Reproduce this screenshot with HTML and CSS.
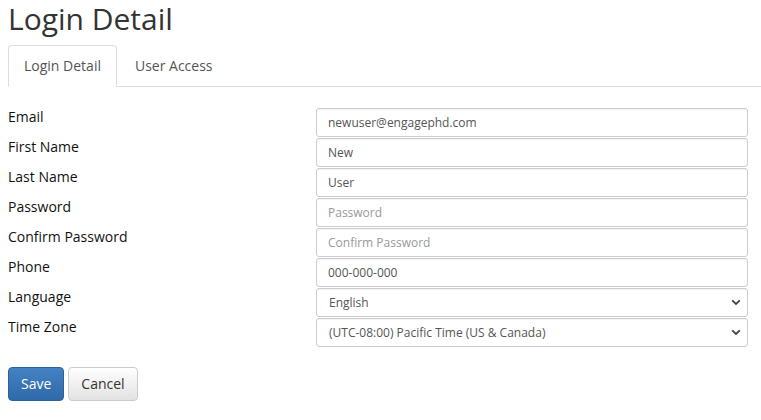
FILE: index.html
```html
<!DOCTYPE html>
<html>
<head>
<meta charset="utf-8">
<link rel="stylesheet" href="styles.css">
</head>
<body>
<h1 class="title">Login Detail</h1>
<ul class="tabs">
  <li class="tab active"><a>Login Detail</a></li>
  <li class="tab"><a>User Access</a></li>
</ul>
<form class="form">
  <div class="row"><label class="label">Email</label><input class="control" type="text" value="newuser@engagephd.com"></div>
  <div class="row"><label class="label">First Name</label><input class="control" type="text" value="New"></div>
  <div class="row"><label class="label">Last Name</label><input class="control" type="text" value="User"></div>
  <div class="row"><label class="label">Password</label><input class="control" type="password" placeholder="Password"></div>
  <div class="row"><label class="label">Confirm Password</label><input class="control" type="password" placeholder="Confirm Password"></div>
  <div class="row"><label class="label">Phone</label><input class="control" type="text" value="000-000-000"></div>
  <div class="row"><label class="label">Language</label>
    <div class="select"><span>English</span><svg class="chev" width="10" height="7" viewBox="0 0 10 7"><path d="M1.2 1.3 L5 5 L8.8 1.3" fill="none" stroke="#444" stroke-width="1.8"/></svg></div>
  </div>
  <div class="row"><label class="label">Time Zone</label>
    <div class="select"><span>(UTC-08:00) Pacific Time (US &amp; Canada)</span><svg class="chev" width="10" height="7" viewBox="0 0 10 7"><path d="M1.2 1.3 L5 5 L8.8 1.3" fill="none" stroke="#444" stroke-width="1.8"/></svg></div>
  </div>
  <div class="actions">
    <button type="button" class="btn btn-primary">Save</button>
    <button type="button" class="btn btn-default">Cancel</button>
  </div>
</form>
</body>
</html>
```
FILE: styles.css
```css
* { box-sizing: border-box; }
html, body { background: #fff; }
body {
  margin: 0;
  padding: 0 0 0 8px;
  font-family: "Open Sans", "Noto Sans", sans-serif;
  font-size: 14px;
  line-height: 20px;
  color: #333;
}
.title {
  margin: 0;
  font-size: 30px;
  line-height: 38px;
  font-weight: 400;
  color: #333;
}
.tabs {
  list-style: none;
  margin: 7px 0 0 0;
  padding: 0;
  display: flex;
  border-bottom: 1px solid #ddd;
}
.tab {
  margin-bottom: -1px;
  margin-right: 2px;
}
.tab a {
  display: block;
  padding: 10px 15px;
  line-height: 20px;
  border: 1px solid transparent;
  border-radius: 4px 4px 0 0;
  color: #555;
}
.tab.active a {
  border-color: #ddd;
  border-bottom-color: #fff;
  background: #fff;
}
.form {
  margin-top: 20px;
  width: 740px;
}
.row {
  display: grid;
  grid-template-columns: 308px 432px;
  height: 30px;
}
.label {
  color: #111;
  font-weight: 400;
  line-height: 20px;
}
.control, .select {
  height: 29px;
  margin-top: 1px;
  border: 1px solid #ccc;
  border-radius: 3px;
  padding: 0 11px;
  font-family: "Open Sans", "Noto Sans", sans-serif;
  font-size: 12px;
  color: #555;
  background: #fff;
  outline: none;
  box-shadow: inset 0 1px 1px rgba(0,0,0,0.05);
}
.control::placeholder { color: #999; }
.select {
  display: flex;
  align-items: center;
  justify-content: space-between;
  padding: 0 5px 0 12px;
}
.chev { margin-right: 1px; }
.actions {
  margin-top: 20px;
  display: flex;
  gap: 4px;
}
.btn {
  font-family: "Open Sans", "Noto Sans", sans-serif;
  font-size: 14px;
  line-height: 20px;
  padding: 6px 12px;
  border-radius: 4px;
  border: 1px solid #ccc;
  cursor: pointer;
}
.btn-primary {
  color: #fff;
  background: linear-gradient(#4482c4, #2f69a8);
  border-color: #2e6098;
}
.btn-default {
  color: #333;
  background: linear-gradient(#fff, #e2e2e2);
  border-color: #ccc;
}
```
